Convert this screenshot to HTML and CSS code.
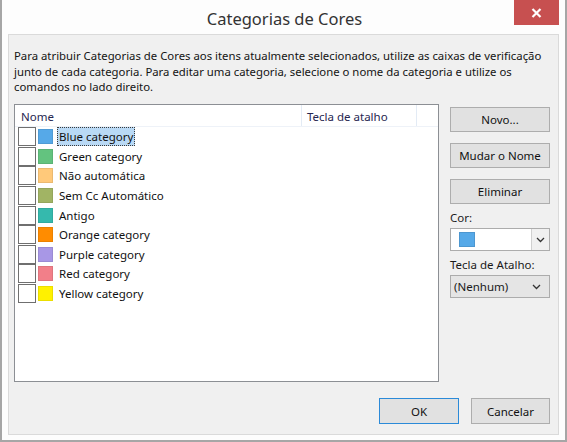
FILE: index.html
```html
<!DOCTYPE html>
<html lang="pt">
<head>
<meta charset="utf-8">
<title>Categorias de Cores</title>
<link rel="stylesheet" href="styles.css">
</head>
<body>
<div class="window">
  <div class="titlebar">
    <div class="title">Categorias de Cores</div>
    <button class="close" aria-label="Fechar">
      <svg width="11" height="10" viewBox="0 0 11 10"><path d="M1.5 1 L9.5 9 M9.5 1 L1.5 9" stroke="#fff" stroke-width="2.2" fill="none"/></svg>
    </button>
  </div>
  <div class="panel">
    <p class="desc">Para atribuir Categorias de Cores aos itens atualmente selecionados, utilize as caixas de verificação junto de cada categoria. Para editar uma categoria, selecione o nome da categoria e utilize os comandos no lado direito.</p>
    <div class="main">
      <div class="list">
        <div class="head">
          <div class="col-name">Nome</div>
          <div class="col-key">Tecla de atalho</div>
          <div class="col-rest"></div>
        </div>
        <div class="rows">
          <div class="row"><span class="cb"></span><span class="sw" style="background:#56a9e8"></span><span class="label sel">Blue category</span></div>
          <div class="row"><span class="cb"></span><span class="sw" style="background:#63c37f"></span><span class="label">Green category</span></div>
          <div class="row"><span class="cb"></span><span class="sw" style="background:#ffc97a"></span><span class="label">Não automática</span></div>
          <div class="row"><span class="cb"></span><span class="sw" style="background:#a1b464"></span><span class="label">Sem Cc Automático</span></div>
          <div class="row"><span class="cb"></span><span class="sw" style="background:#35b9ad"></span><span class="label">Antigo</span></div>
          <div class="row"><span class="cb"></span><span class="sw" style="background:#ff8c00"></span><span class="label">Orange category</span></div>
          <div class="row"><span class="cb"></span><span class="sw" style="background:#a897e6"></span><span class="label">Purple category</span></div>
          <div class="row"><span class="cb"></span><span class="sw" style="background:#f27f89"></span><span class="label">Red category</span></div>
          <div class="row"><span class="cb"></span><span class="sw" style="background:#fff100"></span><span class="label">Yellow category</span></div>
        </div>
      </div>
      <div class="side">
        <button class="btn">Novo...</button>
        <button class="btn">Mudar o Nome</button>
        <button class="btn">Eliminar</button>
        <div class="lbl lbl-first">Cor:</div>
        <div class="combo">
          <div class="combo-val"><span class="combo-sw"></span></div>
          <div class="combo-arrow">
            <svg width="9" height="6" viewBox="0 0 9 6"><path d="M1 1 L4.5 4.5 L8 1" stroke="#333" stroke-width="1.3" fill="none"/></svg>
          </div>
        </div>
        <div class="lbl">Tecla de Atalho:</div>
        <div class="select">
          <span>(Nenhum)</span>
          <svg width="9" height="6" viewBox="0 0 9 6"><path d="M1 1 L4.5 4.5 L8 1" stroke="#333" stroke-width="1.3" fill="none"/></svg>
        </div>
      </div>
    </div>
    <div class="footer">
      <button class="btn btn-foot default">OK</button>
      <button class="btn btn-foot">Cancelar</button>
    </div>
  </div>
</div>
</body>
</html>
```

FILE: styles.css
```css
* { box-sizing: border-box; }
html, body { margin: 0; padding: 0; }
body {
  width: 567px;
  height: 442px;
  background: #ffffff;
  font-family: "Noto Sans", "DejaVu Sans", sans-serif;
  font-size: 11.5px;
  color: #1a1a1a;
  overflow: hidden;
}
.window {
  width: 567px;
  height: 442px;
  background: #fdfdfd;
  border-left: 2px solid #a6a6a6;
  border-right: 2px solid #a6a6a6;
  border-bottom: 2px solid #a6a6a6;
  display: flex;
  flex-direction: column;
}
.titlebar {
  position: relative;
  height: 34px;
  flex: none;
  display: flex;
  align-items: center;
  justify-content: center;
}
.title {
  font-size: 16.5px;
  color: #333333;
  padding-top: 2px;
  padding-left: 2px;
}
.close {
  position: absolute;
  top: 0;
  right: 6px;
  width: 45px;
  height: 25px;
  border: none;
  padding: 0;
  background: #c75050;
  display: flex;
  align-items: center;
  justify-content: center;
}
.panel {
  margin: 0 6px;
  height: 401px;
  border: 1px solid #dadada;
  background: #f0f0f0;
  padding: 13px 8px 0 5px;
  display: flex;
  flex-direction: column;
}
.desc {
  margin: 0;
  font-size: 11.35px;
  line-height: 15.5px;
  height: 56px;
  color: #141414;
}
.main {
  display: flex;
  gap: 11px;
}
.list {
  width: 425px;
  height: 278px;
  border: 1px solid #8c8f94;
  background: #ffffff;
  display: flex;
  flex-direction: column;
}
.head {
  height: 22px;
  display: flex;
  border-bottom: 1px solid #eef2f8;
  color: #262650;
  flex: none;
}
.head > div {
  display: flex;
  align-items: center;
  padding-top: 1px;
}
.col-name {
  width: 287px;
  padding-left: 6px;
  border-right: 1px solid #e3ebf5;
}
.col-key {
  width: 115px;
  padding-left: 5px;
  border-right: 1px solid #e3ebf5;
}
.col-rest { flex: 1; }
.rows {
  padding-left: 3px;
}
.row {
  height: 19.6px;
  display: flex;
  align-items: center;
}
.cb {
  width: 18px;
  height: 19px;
  border: 1px solid #6f6f6f;
  background: #ffffff;
  flex: none;
}
.sw {
  width: 15px;
  height: 15px;
  margin-left: 2px;
  flex: none;
  box-shadow: inset 0 0 0 1px rgba(0,0,0,0.08);
}
.label {
  margin-left: 4px;
  padding: 0 1px;
  line-height: 17px;
  border: 1px dotted transparent;
  color: #111;
}
.label.sel {
  background: #b9d9f5;
  border-color: #3a3a3a;
}
.side {
  width: 100px;
  padding-top: 3px;
  display: flex;
  flex-direction: column;
}
.btn {
  font-family: inherit;
  font-size: 11.5px;
  color: #111;
  height: 25px;
  background: #e1e1e1;
  border: 1px solid #adadad;
  padding: 0;
  margin: 0 0 11px 0;
}
.lbl {
  line-height: 16px;
  margin-top: 6px;
  margin-bottom: 2px;
}
.lbl-first { margin-top: -5px; }
.combo {
  height: 23px;
  border: 1px solid #acacac;
  background: #ffffff;
  display: flex;
}
.combo-val {
  flex: 1;
  display: flex;
  align-items: center;
  padding-left: 8px;
}
.combo-sw {
  width: 16px;
  height: 15px;
  background: #56a9e8;
  box-shadow: inset 0 0 0 1px rgba(0,0,0,0.1);
}
.combo-arrow {
  width: 18px;
  border-left: 1px solid #d0d0d0;
  background: #f0f0f0;
  display: flex;
  align-items: center;
  justify-content: center;
}
.select {
  height: 23px;
  border: 1px solid #acacac;
  background: #e5e5e5;
  display: flex;
  align-items: center;
  justify-content: space-between;
  padding: 0 8px 0 3px;
}
.footer {
  margin-top: 16px;
  display: flex;
  justify-content: flex-end;
  gap: 12px;
}
.btn-foot {
  width: 79px;
  height: 26px;
  margin: 0;
}
.btn-foot.default {
  width: 80px;
  border-color: #2b8ad8;
}
```
